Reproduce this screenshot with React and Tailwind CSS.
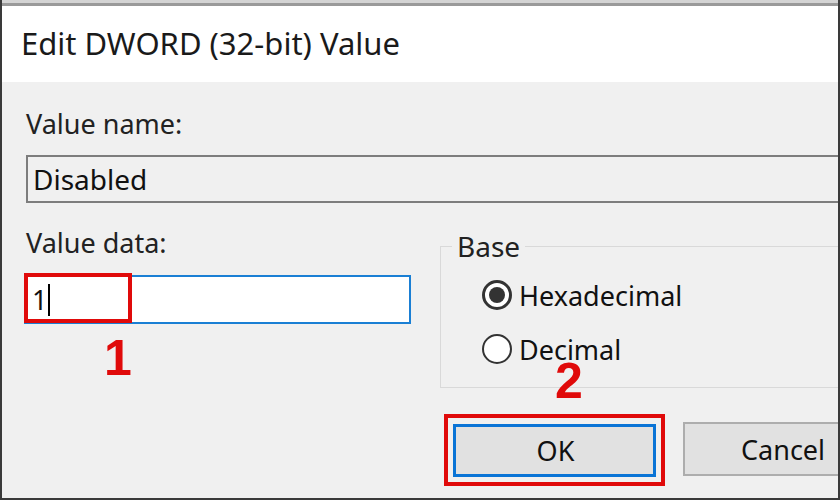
const font = { fontFamily: '"Noto Sans", "Open Sans", sans-serif' };
const numFont = { fontFamily: '"Liberation Sans", Arial, sans-serif' };

const Radio = ({ checked, label }) => (
  <div className="flex items-center gap-[7px] h-[40px]">
    <span
      className={
        checked
          ? 'w-[30px] h-[30px] shrink-0 rounded-full border-[3px] border-[#333] bg-white flex items-center justify-center'
          : 'w-[30px] h-[30px] shrink-0 rounded-full border-2 border-[#333] bg-white'
      }
    >
      {checked && <span className="w-[16px] h-[16px] rounded-full bg-[#333]" />}
    </span>
    <span className="text-[27px] text-[#111] leading-none">{label}</span>
  </div>
);

const App = () => {
  return (
    <div
      className="w-[840px] h-[500px] overflow-hidden bg-[#f0f0f0] flex flex-col border-l-2 border-r-2 border-b-2 border-[#3a3a3a]"
      style={font}
    >
      <div className="h-[6px] shrink-0 bg-[#d4d4d4] border-b-[3px] border-[#9a9a9a]" />

      {/* title bar */}
      <div className="h-[76px] shrink-0 bg-white flex items-center pl-[19px]">
        <span className="text-[31px] text-[#1a1a1a] pb-[2px] whitespace-nowrap">Edit DWORD (32-bit) Value</span>
      </div>

      {/* body */}
      <div className="relative flex-1 pl-[24px]">
        <div className="mt-[28px] text-[27px] leading-[28px] text-[#222]">Value name:</div>
        <div className="mt-[17px] h-[48px] border-2 border-[#7d7d7d] bg-[#f0f0f0] flex items-center pl-[5px] -mr-[4px]">
          <span className="text-[28px] text-[#111] leading-none">Disabled</span>
        </div>

        <div className="flex mt-[26px]">
          {/* left column */}
          <div className="w-[385px] shrink-0 flex flex-col">
            <div className="text-[27px] leading-[28px] text-[#222]">Value data:</div>
            <div className="mt-[18px] h-[49px] border-2 border-[#1a7fd4] bg-white flex items-center pl-[6px] -ml-[2px]">
              <span className="text-[27px] text-[#111] leading-none">1</span>
              <span className="w-[2px] h-[32px] bg-black ml-[1px]" />
            </div>
          </div>

          {/* base group */}
          <div className="ml-[29px] flex-1 pt-[17px]">
            <div className="relative h-[142px] border border-[#d9d9d9] -mr-[4px] pl-[41px] pt-[28px]">
              <span className="absolute -top-[15px] left-[11px] px-[5px] bg-[#f0f0f0] text-[28px] leading-[28px] text-[#222]">
                Base
              </span>
              <Radio checked label="Hexadecimal" />
              <div className="mt-[14px]">
                <Radio label="Decimal" />
              </div>
            </div>
          </div>
        </div>

        {/* buttons */}
        <div className="flex items-start mt-[34px] ml-[427px] gap-[27px] w-[420px]">
          <div className="w-[203px] h-[53px] shrink-0 mt-[2px] bg-[#e1e1e1] border-[3px] border-[#0a74d6] flex items-center justify-center">
            <span className="text-[27px] text-[#111] leading-none pl-[2px]">OK</span>
          </div>
          <div className="w-[180px] h-[54px] shrink-0 bg-[#e1e1e1] border-2 border-[#adadad] flex items-center pl-[56px]">
            <span className="text-[27px] text-[#111] leading-none">Cancel</span>
          </div>
        </div>

        {/* annotations */}
        <div className="absolute left-[22px] top-[191px] w-[108px] h-[50px] border-4 border-[#e00a0a]" />
        <div
          className="absolute left-[102px] top-[251px] text-[50px] font-bold leading-none text-[#e00a0a]"
          style={numFont}
        >
          1
        </div>
        <div
          className="absolute left-[553px] top-[274px] text-[50px] font-bold leading-none text-[#e00a0a]"
          style={numFont}
        >
          2
        </div>
        <div className="absolute left-[442px] top-[332px] w-[221px] h-[72px] border-4 border-[#e00a0a]" />
      </div>
    </div>
  );
};

export default App;
